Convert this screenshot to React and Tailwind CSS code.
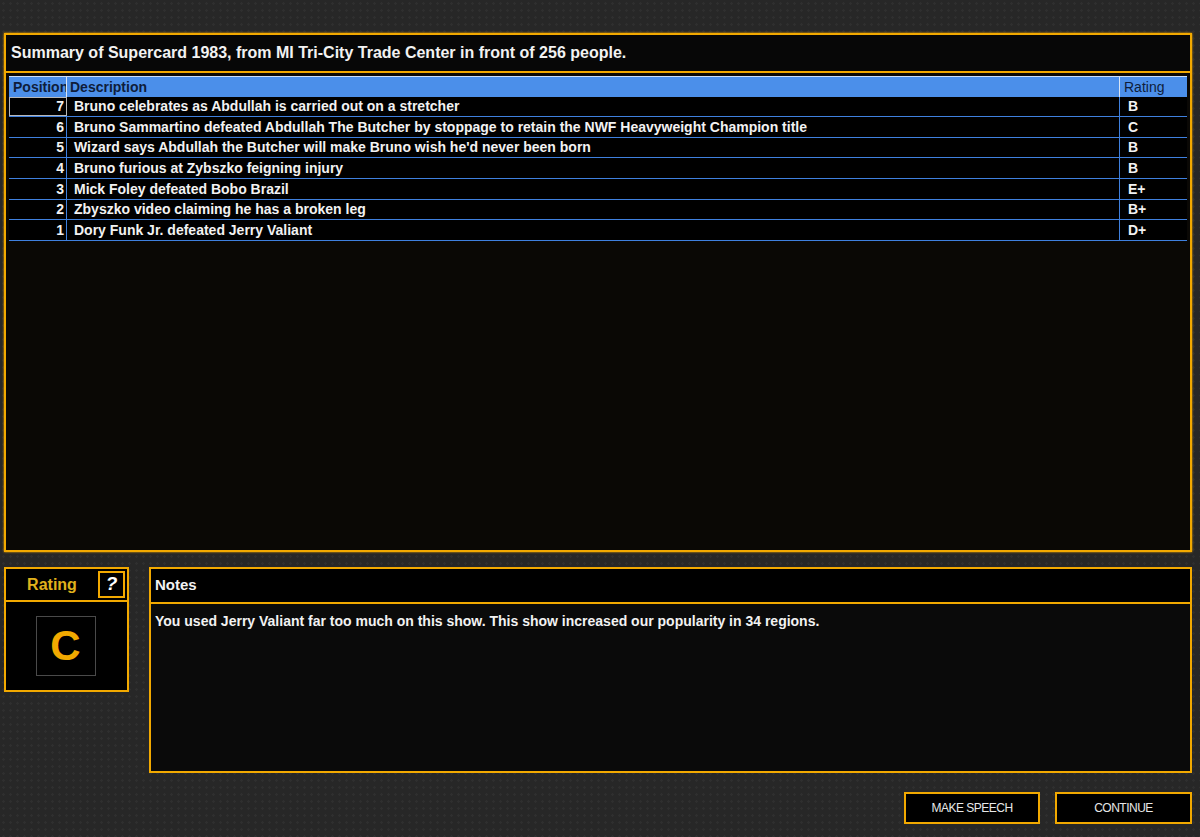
import React from 'react';

const rows = [
  { pos: 7, desc: 'Bruno celebrates as Abdullah is carried out on a stretcher', rating: 'B', h: 'h-[20px]' },
  { pos: 6, desc: 'Bruno Sammartino defeated Abdullah The Butcher by stoppage to retain the NWF Heavyweight Champion title', rating: 'C', h: 'h-[21px]' },
  { pos: 5, desc: "Wizard says Abdullah the Butcher will make Bruno wish he'd never been born", rating: 'B', h: 'h-[20px]' },
  { pos: 4, desc: 'Bruno furious at Zybszko feigning injury', rating: 'B', h: 'h-[21px]' },
  { pos: 3, desc: 'Mick Foley defeated Bobo Brazil', rating: 'E+', h: 'h-[21px]' },
  { pos: 2, desc: 'Zbyszko video claiming he has a broken leg', rating: 'B+', h: 'h-[20px]' },
  { pos: 1, desc: 'Dory Funk Jr. defeated Jerry Valiant', rating: 'D+', h: 'h-[21px]' },
];

const ResultRow = ({ row, selected }) => (
  <div className={'flex border-b border-[#3f80de] bg-black text-[14px] font-bold text-[#f2f2f2] ' + row.h}>
    <div
      className={
        'w-[58px] shrink-0 flex items-center justify-end pr-[2px] border-r border-[#3f80de] ' +
        (selected ? 'outline outline-[#b8b8b8] -outline-offset-1' : '')
      }
    >
      {row.pos}
    </div>
    <div className="flex-1 flex items-center pl-[7px] whitespace-nowrap overflow-hidden">{row.desc}</div>
    <div className="w-[68px] shrink-0 flex items-center pl-[8px] border-l border-[#3f80de]">{row.rating}</div>
  </div>
);

const App = () => {
  return (
    <div
      className="w-[1200px] h-[837px] overflow-hidden bg-[#272727] bg-[radial-gradient(#2f2f2f_1px,transparent_1.5px)] bg-[size:7px_7px] pt-[33px] pl-[4px] pr-[8px]"
      style={{ fontFamily: '"Liberation Sans", Arial, sans-serif' }}
    >
      {/* main summary panel */}
      <div className="h-[519px] border-2 border-[#f2a900] bg-[#0a0805] flex flex-col shadow-[0_0_2px_#f2a900]">
        <div className="h-[38px] shrink-0 border-b-2 border-[#f2a900] bg-[#070707] flex items-center pl-[5px] text-[16px] font-bold text-[#f2f2f2]">
          Summary of Supercard 1983, from MI Tri-City Trade Center in front of 256 people.
        </div>
        <div className="flex-1 pt-[3px] px-[3px]">
          <div className="flex h-[21px] bg-[#4b8fea] border-t border-[#cfe0f8] text-[14px] text-[#0f1d3a]">
            <div className="w-[58px] shrink-0 flex items-center pl-[4px] border-r border-[#d8e4f4] overflow-hidden whitespace-nowrap font-bold">
              Position
            </div>
            <div className="flex-1 flex items-center pl-[3px] font-bold">Description</div>
            <div className="w-[68px] shrink-0 flex items-center pl-[4px] border-l border-[#d8e4f4]">Rating</div>
          </div>
          {rows.map((row, i) => (
            <ResultRow key={row.pos} row={row} selected={i === 0} />
          ))}
        </div>
      </div>

      {/* bottom panels */}
      <div className="flex gap-[20px] mt-[15px]">
        <div className="w-[125px] h-[125px] shrink-0 border-2 border-[#f2a900] bg-black flex flex-col">
          <div className="h-[33px] shrink-0 border-b-2 border-[#f2a900] flex items-center relative">
            <span className="w-[92px] text-center text-[16px] font-bold text-[#e0b21c]">Rating</span>
            <div className="absolute right-[2px] top-[2px] w-[27px] h-[27px] border-2 border-[#f2a900] flex items-center justify-center text-[19px] font-bold italic text-white">
              ?
            </div>
          </div>
          <div className="flex-1 flex items-start justify-center pt-[14px] pr-[2px]">
            <div className="w-[60px] h-[60px] border border-[#4a4a4a] flex items-center justify-center text-[42px] font-bold text-[#f2a900] leading-none">
              C
            </div>
          </div>
        </div>

        <div className="flex-1 h-[206px] border-2 border-[#f2a900] bg-[#0a0a0a] flex flex-col">
          <div className="h-[35px] shrink-0 border-b-2 border-[#f2a900] bg-black flex items-center pl-[4px] text-[15px] font-bold text-[#f2f2f2]">
            Notes
          </div>
          <div className="flex-1 pl-[4px] pt-[7px] text-[14px] font-bold text-[#f2f2f2]">
            You used Jerry Valiant far too much on this show. This show increased our popularity in 34 regions.
          </div>
        </div>
      </div>

      {/* buttons */}
      <div className="flex justify-end gap-[15px] mt-[19px]">
        <button className="w-[136px] h-[32px] border-2 border-[#f2a900] bg-black text-[12px] tracking-[-0.5px] text-[#e8e8e8]">
          MAKE SPEECH
        </button>
        <button className="w-[137px] h-[32px] border-2 border-[#f2a900] bg-black text-[12px] tracking-[-0.5px] text-[#e8e8e8]">
          CONTINUE
        </button>
      </div>
    </div>
  );
};

export default App;
